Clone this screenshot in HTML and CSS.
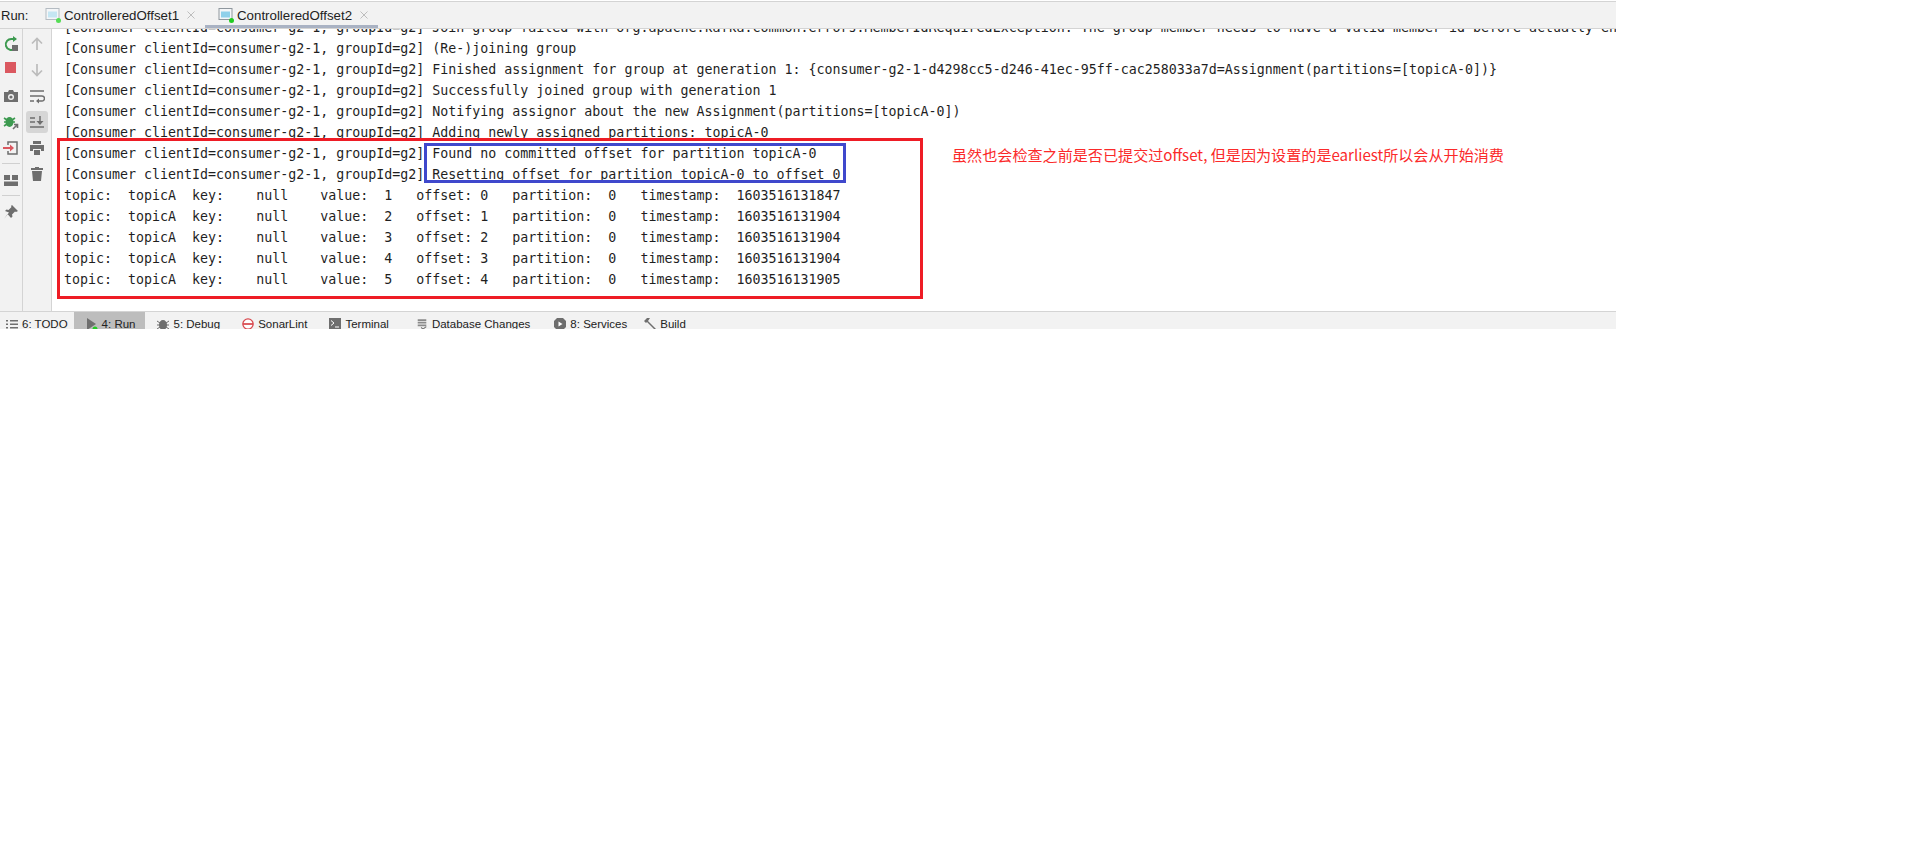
FILE: index.html
```html
<!DOCTYPE html>
<html lang="en">
<head>
<meta charset="utf-8">
<title>Run</title>
<link rel="stylesheet" href="styles.css">
</head>
<body>
<div class="ide">
  <div class="tabs">
    <span class="run-label">Run:</span>
    <div class="tab">
      <svg class="tab-icon" viewBox="0 0 16 16"><rect x="1" y="1.500" width="13" height="11" fill="#f4f6f8" stroke="#b4bbc2"/><rect x="3" y="4.500" width="9" height="6" fill="#c5e6f3"/><circle cx="13.500" cy="13.500" r="2.500" fill="#55dd55"/></svg>
      <span>ControlleredOffset1</span>
      <svg class="close" viewBox="0 0 8 8"><path d="M.5.500l7 7M7.500.500l-7 7" stroke="#bdbdbd" fill="none"/></svg>
    </div>
    <div class="tab active">
      <svg class="tab-icon" viewBox="0 0 16 16"><rect x="1" y="1.500" width="13" height="11" fill="#f4f6f8" stroke="#8f979e"/><rect x="3" y="4.500" width="9" height="6" fill="#8fd0ea"/><circle cx="13.500" cy="13.500" r="2.500" fill="#22cc22"/></svg>
      <span>ControlleredOffset2</span>
      <svg class="close" viewBox="0 0 8 8"><path d="M.5.500l7 7M7.500.500l-7 7" stroke="#bdbdbd" fill="none"/></svg>
    </div>
  </div>
  <div class="main">
    <div class="rail rail-a">
      <svg class="ico" viewBox="0 0 16 16"><path d="M12 12.500A5.500 5.500 0 1 1 9 3H13" fill="none" stroke="#3d9a50" stroke-width="2"/><path d="M10 0v6l4-3z" fill="#3d9a50"/><rect x="9" y="9" width="6" height="6" fill="#6e6e6e"/></svg>
      <svg class="ico" viewBox="0 0 16 16"><rect x="2" y="0" width="11" height="11" fill="#db5860"/></svg>
      <svg class="ico" viewBox="0 0 16 16"><path d="M1 4h4l1-2h4l1 2h4v10H1z" fill="#6e6e6e"/><circle cx="8" cy="9" r="3" fill="#f2f2f2"/><circle cx="8" cy="9" r="1.600" fill="#6e6e6e"/></svg>
      <svg class="ico" viewBox="0 0 16 16"><ellipse cx="6.500" cy="8" rx="4" ry="5" fill="#3d9a50"/><path d="M1 4l3 2M1 8h3M1 12l3-2M12 4l-3 2M12 8H9" stroke="#3d9a50" stroke-width="1.600"/><path d="M10 15l4-4M11 10.500h3.500V14" fill="none" stroke="#6e6e6e" stroke-width="1.600"/></svg>
      <svg class="ico" viewBox="0 0 16 16"><path d="M5 5V2h9v12H5v-3" fill="none" stroke="#6e6e6e" stroke-width="1.500"/><path d="M0 8h8" stroke="#db5860" stroke-width="2"/><path d="M7 4.500 11 8l-4 3.500z" fill="#db5860"/></svg>
      <hr class="rule">
      <svg class="ico" viewBox="0 0 16 16"><path d="M1 3h6v5H1zM9 3h6v5H9zM1 9.500h14V14H1z" fill="#6e6e6e"/></svg>
      <hr class="rule">
      <svg class="ico" viewBox="0 0 16 16"><path d="M9 1l6 6-2 1-1-.5-3 3 .5 2-1.500 1.500L4.500 10 1 15l5-6.500L2 7l1.500-1.500 2 .5 3-3L8 2z" fill="#6e6e6e"/></svg>
    </div>
    <div class="rail rail-b">
      <svg class="ico" viewBox="0 0 16 16"><path d="M8 14V3M3 7.500 8 2.500l5 5" fill="none" stroke="#bcbcbc" stroke-width="1.700"/></svg>
      <svg class="ico" viewBox="0 0 16 16"><path d="M8 2v11M3 8.500l5 5 5-5" fill="none" stroke="#bcbcbc" stroke-width="1.700"/></svg>
      <svg class="ico" viewBox="0 0 16 16"><path d="M1 3h14M1 8h12a2.500 2.500 0 0 1 0 5H8M1 13h4" fill="none" stroke="#6e6e6e" stroke-width="1.500"/><path d="M10 10.500v5l-3-2.500z" fill="#6e6e6e"/></svg>
      <span class="pressed"><svg class="ico" viewBox="0 0 16 16"><path d="M1 4h5M1 8h5M1 13h14M11 2v7" fill="none" stroke="#6e6e6e" stroke-width="1.500"/><path d="M7.500 7h7L11 11z" fill="#6e6e6e"/></svg></span>
      <svg class="ico" viewBox="0 0 16 16"><path d="M4 1h8v3H4zM1 5h14v6h-3V9H4v2H1zM5 10h6v5H5z" fill="#6e6e6e"/></svg>
      <svg class="ico" viewBox="0 0 16 16"><path d="M6 1h4v1h4v2H2V2h4zM3 5h10l-1 10H4z" fill="#6e6e6e"/></svg>
    </div>
    <div class="console">
      <div class="cut"><div class="line">[Consumer clientId=consumer-g2-1, groupId=g2] Join group failed with org.apache.kafka.common.errors.MemberIdRequiredException: The group member needs to have a valid member id before actually en</div></div>
      <div class="line">[Consumer clientId=consumer-g2-1, groupId=g2] (Re-)joining group</div>
      <div class="line">[Consumer clientId=consumer-g2-1, groupId=g2] Finished assignment for group at generation 1: {consumer-g2-1-d4298cc5-d246-41ec-95ff-cac258033a7d=Assignment(partitions=[topicA-0])}</div>
      <div class="line">[Consumer clientId=consumer-g2-1, groupId=g2] Successfully joined group with generation 1</div>
      <div class="line">[Consumer clientId=consumer-g2-1, groupId=g2] Notifying assignor about the new Assignment(partitions=[topicA-0])</div>
      <div class="line">[Consumer clientId=consumer-g2-1, groupId=g2] Adding newly assigned partitions: topicA-0</div>
      <div class="line">[Consumer clientId=consumer-g2-1, groupId=g2] Found no committed offset for partition topicA-0</div>
      <div class="line">[Consumer clientId=consumer-g2-1, groupId=g2] Resetting offset for partition topicA-0 to offset 0</div>
      <div class="line">topic:  topicA  key:    null    value:  1   offset: 0   partition:  0   timestamp:  1603516131847</div>
      <div class="line">topic:  topicA  key:    null    value:  2   offset: 1   partition:  0   timestamp:  1603516131904</div>
      <div class="line">topic:  topicA  key:    null    value:  3   offset: 2   partition:  0   timestamp:  1603516131904</div>
      <div class="line">topic:  topicA  key:    null    value:  4   offset: 3   partition:  0   timestamp:  1603516131904</div>
      <div class="line">topic:  topicA  key:    null    value:  5   offset: 4   partition:  0   timestamp:  1603516131905</div>
    </div>
    <div class="mark mark-red"></div>
    <div class="mark mark-blue"></div>
    <div class="note">虽然也会检查之前是否已提交过offset, 但是因为设置的是earliest所以会从开始消费</div>
  </div>
  <div class="bottom">
    <div class="bt first"><svg class="bi" viewBox="0 0 12 12"><path d="M0 2h2v1.500H0zM4 2h8v1.500H4zM0 5.500h2V7H0zM4 5.500h8V7H4zM0 9h2v1.500H0zM4 9h8v1.500H4z" fill="#6e6e6e"/></svg>6: TODO</div>
    <div class="bt on"><svg class="bi" viewBox="0 0 12 12"><path d="M1 0l9 6-9 6z" fill="#6e6e6e"/><circle cx="9" cy="11" r="2.500" fill="#22cc22"/></svg>4: Run</div>
    <div class="bt"><svg class="bi" viewBox="0 0 12 12"><ellipse cx="6" cy="7" rx="4" ry="5" fill="#6e6e6e"/><path d="M0 3l3 2M0 7h3M0 11l3-2M12 3 9 5M12 7H9M12 11 9 9" stroke="#6e6e6e"/></svg>5: Debug</div>
    <div class="bt"><svg class="bi" viewBox="0 0 14 14"><circle cx="7" cy="7" r="6" fill="#fff" stroke="#d8474c" stroke-width="1.500"/><path d="M1 7h12" stroke="#d8474c" stroke-width="2"/></svg>SonarLint</div>
    <div class="bt term"><svg class="bi" viewBox="0 0 12 12"><rect width="12" height="12" fill="#6e6e6e"/><path d="M2 2.500 5 5 2 7.500M6 9h4" fill="none" stroke="#fff"/></svg>Terminal</div>
    <div class="bt db"><svg class="bi" viewBox="0 0 12 14"><path d="M1 2.500h10M1 5.500h10M1 8.500h10" stroke="#8a8a8a" stroke-width="2"/><path d="M5 11l2 2 4-3" fill="none" stroke="#6e6e6e" stroke-width="1.200"/></svg>Database Changes</div>
    <div class="bt serv"><svg class="bi" viewBox="0 0 12 12"><path d="M3 0h6l3 3v6l-3 3H3L0 9V3z" fill="#6e6e6e"/><path d="M4.500 3.500 8.500 6l-4 2.500z" fill="#fff"/></svg>8: Services</div>
    <div class="bt"><svg class="bi" viewBox="0 0 12 12"><path d="M0 3 3 0h3L4 3l8 8-1 1-8-8-1 1z" fill="#6e6e6e"/></svg>Build</div>
  </div>
</div>
</body>
</html>
```

FILE: styles.css
```css
html, body { margin: 0; padding: 0; background: #fff; }
.ide { width: 1616px; height: 329px; padding-top: 1px; box-sizing: border-box; display: flex; flex-direction: column; font-family: "Liberation Sans", Arial, sans-serif; overflow: hidden; }
.tabs { height: 28px; flex: none; background: #f2f2f2; border-top: 1px solid #d4d4d4; border-bottom: 1px solid #d4d4d4; box-sizing: border-box; display: flex; align-items: center; font-size: 13px; color: #222; }
.run-label { width: 45px; padding-left: 1px; box-sizing: border-box; }
.tab { height: 100%; display: flex; align-items: center; width: 160px; box-sizing: border-box; font-size: 13.3px; white-space: nowrap; }
.tab-icon { width: 16px; height: 16px; margin-right: 3px; flex: none; }
.close { width: 8px; height: 8px; margin-left: 8px; flex: none; }
.tab.active { box-shadow: inset 0 -3px 0 #a9b2c3; padding-left: 13px; width: 173px; }
.main { flex: 1; min-height: 0; position: relative; display: flex; }
.rail { flex: none; background: #f2f2f2; display: flex; flex-direction: column; align-items: center; box-sizing: border-box; border-right: 1px solid #d4d4d4; padding-top: 7px; }
.rail-a { width: 23px; }
.rail-b { width: 29px; }
.ico { width: 16px; height: 16px; margin-bottom: 10px; flex: none; display: block; }
.rule { width: 18px; height: 1px; border: 0; background: #d0d0d0; margin: -3px 0 8px; flex: none; }
.pressed { width: 22px; height: 22px; margin: -3px 0 7px; background: #d6d6d6; border-radius: 3px; display: flex; align-items: center; justify-content: center; flex: none; }
.pressed .ico { margin: 0; }
.console { flex: 1; min-width: 0; padding-left: 12px; background: #fff; font-family: "DejaVu Sans Mono", "Liberation Mono", monospace; font-size: 13.3px; line-height: 21px; color: #1f1f1f; overflow: hidden; }
.line { white-space: pre; width: max-content; height: 21px; }
.cut { height: 9px; overflow: hidden; }
.cut .line { margin-top: -12px; }
.mark { position: absolute; box-sizing: border-box; pointer-events: none; }
.mark-red { left: 57px; top: 109px; width: 866px; height: 161px; border: 3px solid #ee1c25; }
.mark-blue { left: 424px; top: 114px; width: 422px; height: 40px; border: 3px solid #3f48cc; }
.note { position: absolute; left: 952px; top: 114px; font-family: "Noto Sans CJK SC", "Liberation Sans", sans-serif; font-size: 15.1px; color: #fb2a2a; white-space: nowrap; }
.bottom { height: 18px; flex: none; background: #f2f2f2; border-top: 1px solid #d4d4d4; box-sizing: border-box; display: flex; font-size: 11.5px; color: #222; overflow: hidden; }
.bt { height: 17px; display: flex; align-items: center; padding: 6px 10px 0 12px; box-sizing: border-box; white-space: nowrap; }
.bt.first { padding: 6px 6px 0 6px; }
.bt.on { background: #bdbdbd; }
.bt.term { padding-right: 15px; }
.bt.db { padding-right: 12px; }
.bt.serv { padding-right: 5px; }
.bi { width: 12px; height: 12px; margin-right: 4px; flex: none; }
```
